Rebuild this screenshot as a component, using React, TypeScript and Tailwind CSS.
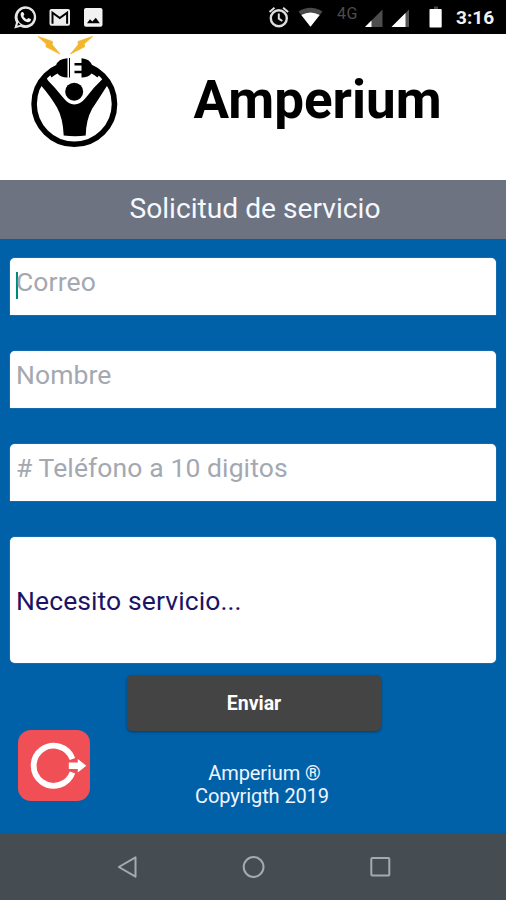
import type { ReactNode } from 'react'

interface FieldProps {
  hint: string
  focused?: boolean
}

function StatusBar() {
  return (
    <div className="flex h-[34px] w-full shrink-0 bg-black">
      <svg className="h-[34px] w-[330px] shrink-0" viewBox="0 0 330 34" fill="none">
        {/* chat bubble with handset */}
        <path d="M14.300 28.500l1.700-6A10.800 10.800 0 1 1 20.500 26.800z" fill="#e6e6e6" />
        <circle cx="25.700" cy="17" r="8.200" fill="#000" />
        <path d="M17.300 25.700l1-3.200 2.200 2.200z" fill="#000" />
        <path d="M21.200 12.600c1-1.200 2.100-.7 2.500.3l.7 1.800-1.100 1.400c.8 1.600 2 2.600 3.600 3.300l1.300-1.500 2.500 1.200c.6.400.3 2.100-1 2.700-2.200 1-4.800-.300-6.600-2.100-1.900-1.900-3.200-4.900-1.900-7.100z" fill="#f2f2f2" />
        {/* mail */}
        <rect x="49.500" y="9" width="20.500" height="16.800" rx="2" fill="#ededed" />
        <path d="M52.500 23.800V12.800l7.300 5.200 7.300-5.200v11" stroke="#000" strokeWidth="2" />
        {/* picture */}
        <rect x="84" y="8" width="18.500" height="18.800" rx="2" fill="#f2f2f2" />
        <path d="M87 23.300l3-4 2.300 2.300 3.500-3.800 4 5.500z" fill="#000" />
        {/* alarm */}
        <circle cx="278.800" cy="18.200" r="8" stroke="#dedede" strokeWidth="2.400" />
        <path d="M278.800 13.500v5.200l3.500 2.300M269.500 12l5-4.200M288.100 12l-5-4.200" stroke="#dedede" strokeWidth="2" />
        {/* wifi */}
        <path d="M298.500 11.600q12-7.500 24 0l-12 15.100z" fill="#4a4a4a" />
        <path d="M301.300 15q9.200-5 18.400 0l-9.200 11.700z" fill="#fff" />
      </svg>
      <span className="mt-[5px] w-[34px] pl-[7px] text-[16px] leading-[17px] tracking-[0.5px] text-[#4c4c4c]">4G</span>
      <svg className="h-[34px] w-[90px] shrink-0" viewBox="364 0 90 34">
        <path d="M365 27L382.500 9.500V27z" fill="#4d4d4d" />
        <path d="M365 27l6.500-6.500V27z" fill="#fff" />
        <path d="M391.500 27L409 9.500V27z" fill="#555" />
        <path d="M391.500 27L405.500 13V27z" fill="#fff" />
        <path d="M434 6.500h4v3h-4z" fill="#444" />
        <rect x="429.500" y="9" width="12.200" height="18.500" rx=".8" fill="#fff" />
      </svg>
      <span className="ml-[2px] mt-[7px] text-[19px] font-bold leading-[22px] whitespace-nowrap text-[#f2f2f2]">3:16</span>
    </div>
  )
}

function AmperiumLogo() {
  return (
    <svg className="h-[120px] w-[130px] shrink-0" viewBox="0 0 130 120">
      <circle cx="64.300" cy="70" r="40.200" fill="none" stroke="#000" strokeWidth="5.600" />
      <path d="M50 20h29v24H50z" fill="#fff" />
      {/* plug halves */}
      <path d="M38.500 38q4-5 7.500-6.500 2-6.800 11.500-7.300V43.500q-7 0-10-4-3 1.500-6 4z" />
      <path d="M59.500 24v19.500" stroke="#000" strokeWidth="1" />
      <path d="M91 38q-5-5-9-6.500-2-6.800-10.500-7.300V43.500q7 0 10-4 3 1.500 6 4z" />
      <path d="M64.500 30.300h8M64.500 38h8" stroke="#000" strokeWidth="2.600" />
      {/* figure */}
      <path d="M28 47l7.500-4.500 2.500 4Q45 53.500 53 63.500 58.500 70.500 64.300 70.500 70.500 70.500 76 63.500 83 54 92 45.500l2-3.500 6.500 5.500-4.300 5.500Q88 66 82 75q-6 11-6.300 26.500-10 1.500-22 0Q53 84 47 73.500 41 63 31.500 52z" />
      <circle cx="64.200" cy="57.700" r="9" />
      {/* sparks */}
      <path d="M28 2.500l14.500 5-.2 3.200L50 20 36 12.800l.2-3z" fill="#f3b62b" stroke="#f3b62b" strokeWidth=".8" />
      <path d="M82.500 2.500l-14.500 5 .2 3.200L60.500 20 74.500 12.800l-.2-3z" fill="#f3b62b" stroke="#f3b62b" strokeWidth=".8" />
    </svg>
  )
}

function Card({ className, children }: { className: string; children: ReactNode }) {
  return <div className={`flex shrink-0 bg-white shadow-[0_0_1px_#c5d5f4] ${className}`}>{children}</div>
}

function Field({ hint, focused = false }: FieldProps) {
  return (
    <Card className="h-[57px] rounded-t-[5px] pl-1.5">
      <span className={`mt-[14px] h-[27px] w-[2px] ${focused ? 'bg-[#00897b]' : '-mr-[2px]'}`} />
      <span className={`mt-[8px] text-[26.500px] leading-8 tracking-[0.1px] whitespace-nowrap text-[#a3a8b1] ${focused ? '-ml-[2px]' : ''}`}>
        {hint}
      </span>
    </Card>
  )
}

function BrandTile() {
  return (
    <svg className="h-[71px] w-[72px] shrink-0" viewBox="0 0 72 71" fill="none">
      <rect width="72" height="71" rx="13" fill="#f05055" />
      <path d="M54.500 29A20 20 0 1 0 54.500 42.500" stroke="#fff" strokeWidth="5.800" />
      <path d="M50.800 32.500h9V29l8.500 6.700-8.500 6.700v-3.500h-9z" fill="#fff" />
    </svg>
  )
}

function NavBar() {
  return (
    <div className="h-[67px] shrink-0 bg-[#454d52]">
      <svg className="h-[67px] w-[506px]" viewBox="0 0 506 67" fill="none" stroke="#a5abad" strokeWidth="2" strokeLinejoin="round">
        <path d="M118.800 34l16.700-9.700v19.400z" />
        <circle cx="253.600" cy="34" r="9.900" />
        <rect x="371.300" y="25" width="18" height="17.500" rx="1" />
      </svg>
    </div>
  )
}

export default function App() {
  return (
    <div className="flex h-[900px] w-[506px] flex-col overflow-hidden bg-[#0061a9] font-[Roboto,sans-serif]">
      <StatusBar />

      <header className="flex h-[146px] shrink-0 bg-white pl-[10px]">
        <AmperiumLogo />
        <h1 className="ml-[53.500px] mt-[36px] text-[53px] font-bold leading-[60px] text-black">Amperium</h1>
      </header>

      <div className="flex h-[59px] shrink-0 items-center justify-center bg-[#6d7380] pl-1 text-[28.200px] text-[#f5f8ff]">
        Solicitud de servicio
      </div>

      <main className="flex h-[594px] shrink-0 flex-col pt-[19px]">
        <div className="flex flex-col gap-9 px-[10px]">
          <Field hint="Correo" focused />
          <Field hint="Nombre" />
          <Field hint="# Teléfono a 10 digitos" />
          <Card className="h-[126px] items-center rounded-[5px] pl-1.5">
            <span className="pt-px text-[26.500px] tracking-[0.1px] whitespace-nowrap text-[#1b1464]">Necesito servicio...</span>
          </Card>
        </div>

        <button className="ml-[127px] mt-3 h-[56px] w-[254px] shrink-0 rounded-[5px] bg-[#444] pt-[2px] text-[19.500px] font-bold text-white shadow-[0_1px_3px_rgba(0,0,0,0.4)]">
          Enviar
        </button>

        <div className="-mt-px flex pl-[18px]">
          <BrandTile />
          <div className="ml-[105px] mt-[32px] text-center text-[20px] leading-[23px] tracking-[-0.1px] whitespace-nowrap text-[#f0f5ff]">
            <span className="pl-[5px]">Amperium ®</span><br />
            Copyrigth 2019
          </div>
        </div>
      </main>

      <NavBar />
    </div>
  )
}
